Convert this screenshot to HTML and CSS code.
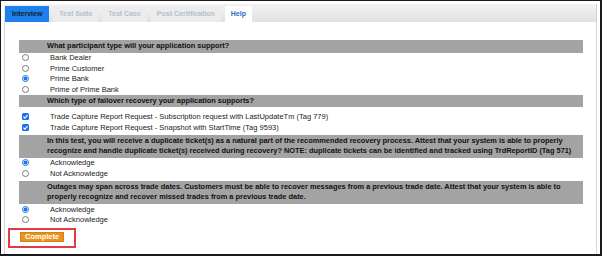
FILE: index.html
```html
<!DOCTYPE html>
<html lang="en">
<head>
  <meta charset="UTF-8" />
  <title>Interview</title>
  <link rel="stylesheet" href="styles.css">
</head>
<body>
  <div class="frame">
    <!-- tabs -->
    <div class="tabbar">
      <div class="tab active">Interview</div>
      <div class="tab off">Test Suite</div>
      <div class="tab off">Test Case</div>
      <div class="tab off">Post Certification</div>
      <div class="tab help">Help</div>
    </div>

    <div class="panel">
      <div class="section">
        <div class="q">What participant type will your application support?</div>
        <div class="opt"><span class="radio"></span>Bank Dealer</div>
        <div class="opt"><span class="radio"></span>Prime Customer</div>
        <div class="opt"><span class="radio on"></span>Prime Bank</div>
        <div class="opt"><span class="radio"></span>Prime of Prime Bank</div>
      </div>

      <div class="section">
        <div class="q">Which type of failover recovery your application supports?</div>
        <div class="checks">
          <div class="opt"><span class="check"><svg viewBox="0 0 8 8" width="8" height="8"><path d="M1.6 4.2 L3.3 5.8 L6.4 2.3" fill="none" stroke="#fff" stroke-width="1.3"/></svg></span>Trade Capture Report Request - Subscription request with LastUpdateTm (Tag 779)</div>
          <div class="opt"><span class="check"><svg viewBox="0 0 8 8" width="8" height="8"><path d="M1.6 4.2 L3.3 5.8 L6.4 2.3" fill="none" stroke="#fff" stroke-width="1.3"/></svg></span>Trade Capture Report Request - Snapshot with StartTime (Tag 9593)</div>
        </div>
      </div>

      <div class="section">
        <div class="q">In this test, you will receive a duplicate ticket(s) as a natural part of the recommended recovery process. Attest that your system is able to properly recognize and handle duplicate ticket(s) received during recovery? NOTE: duplicate tickets can be identified and tracked using TrdReportID (Tag 571)</div>
        <div class="opt"><span class="radio on"></span>Acknowledge</div>
        <div class="opt"><span class="radio"></span>Not Acknowledge</div>
      </div>

      <div class="section spaced">
        <div class="q">Outages may span across trade dates. Customers must be able to recover messages from a previous trade date. Attest that your system is able to properly recognize and recover missed trades from a previous trade date.</div>
        <div class="opt"><span class="radio on"></span>Acknowledge</div>
        <div class="opt"><span class="radio"></span>Not Acknowledge</div>
      </div>

      <!-- highlighted submit -->
      <div class="mark">
        <button class="completeBtn">Complete</button>
      </div>
    </div>
  </div>
</body>
</html>
```

FILE: styles.css
```css
body {
  margin: 0;
  font-family: 'Liberation Sans', Arial, sans-serif;
  background: #fff;
}
.frame {
  width: 602px;
  height: 256px;
  box-sizing: border-box;
  border: solid #1a1a1a;
  border-width: 1px 2px 2px 1px;
  padding: 3px 3px 0 3px;
  display: flex;
  flex-direction: column;
}
/* tab strip */
.tabbar {
  height: 18px;
  box-sizing: border-box;
  padding: 2px 0 0 1px;
  display: flex;
  gap: 4px;
  background: linear-gradient(#f3f3f3, #e1e1e1);
  border-right: 1px solid #cfcfcf;
}
.tab {
  height: 16px;
  line-height: 16px;
  padding: 0 6px;
  font-size: 7px;
  font-weight: bold;
}
.tab.active {
  background: #1f80ec;
  color: #0d1c33;
  padding: 0 7px;
}
.tab.off {
  background: #ececec;
  color: #b3bfcf;
}
.tab.help {
  background: #fff;
  color: #2a6cc6;
}
.panel {
  flex: 1;
  padding: 18px 13px 0 14px;
  border: solid #d6d6d6;
  border-width: 0 1px 0 1px;
}
.section.spaced {
  margin-top: 2px;
}
.q {
  background: #a3a3a3;
  color: #111;
  font-size: 7.4px;
  font-weight: bold;
  line-height: 10.5px;
  padding: 1px 0 1px 28px;
}
.opt {
  height: 10.6px;
  display: flex;
  align-items: center;
  font-size: 7.5px;
  color: #222;
}
.checks {
  padding: 4px 0 2px;
}
.radio,
.check {
  width: 7px;
  height: 7px;
  box-sizing: border-box;
  margin: 0 21px 0 3px;
  flex: none;
}
.radio {
  border: 1px solid #7a7a7a;
  border-radius: 50%;
  background: #fff;
}
.radio.on {
  border-color: #1a73e8;
  background: radial-gradient(circle, #1a73e8 0 1.8px, #fff 2.2px);
}
.check {
  background: #1a73e8;
  border-radius: 1.5px;
  display: flex;
  align-items: center;
  justify-content: center;
}
.check svg {
  width: 7px;
  height: 7px;
}
/* red annotation box round the button */
.mark {
  display: inline-block;
  margin: 3px 0 0 -11px;
  padding: 2px 10px 4px 10px;
  border: 2.5px solid #e23b47;
}
.completeBtn {
  display: block;
  font-family: inherit;
  font-size: 7.5px;
  font-weight: bold;
  color: #fff;
  background: #e8931d;
  border: 1px solid #d68312;
  padding: 0 4px;
  height: 10px;
  line-height: 8px;
}
```
